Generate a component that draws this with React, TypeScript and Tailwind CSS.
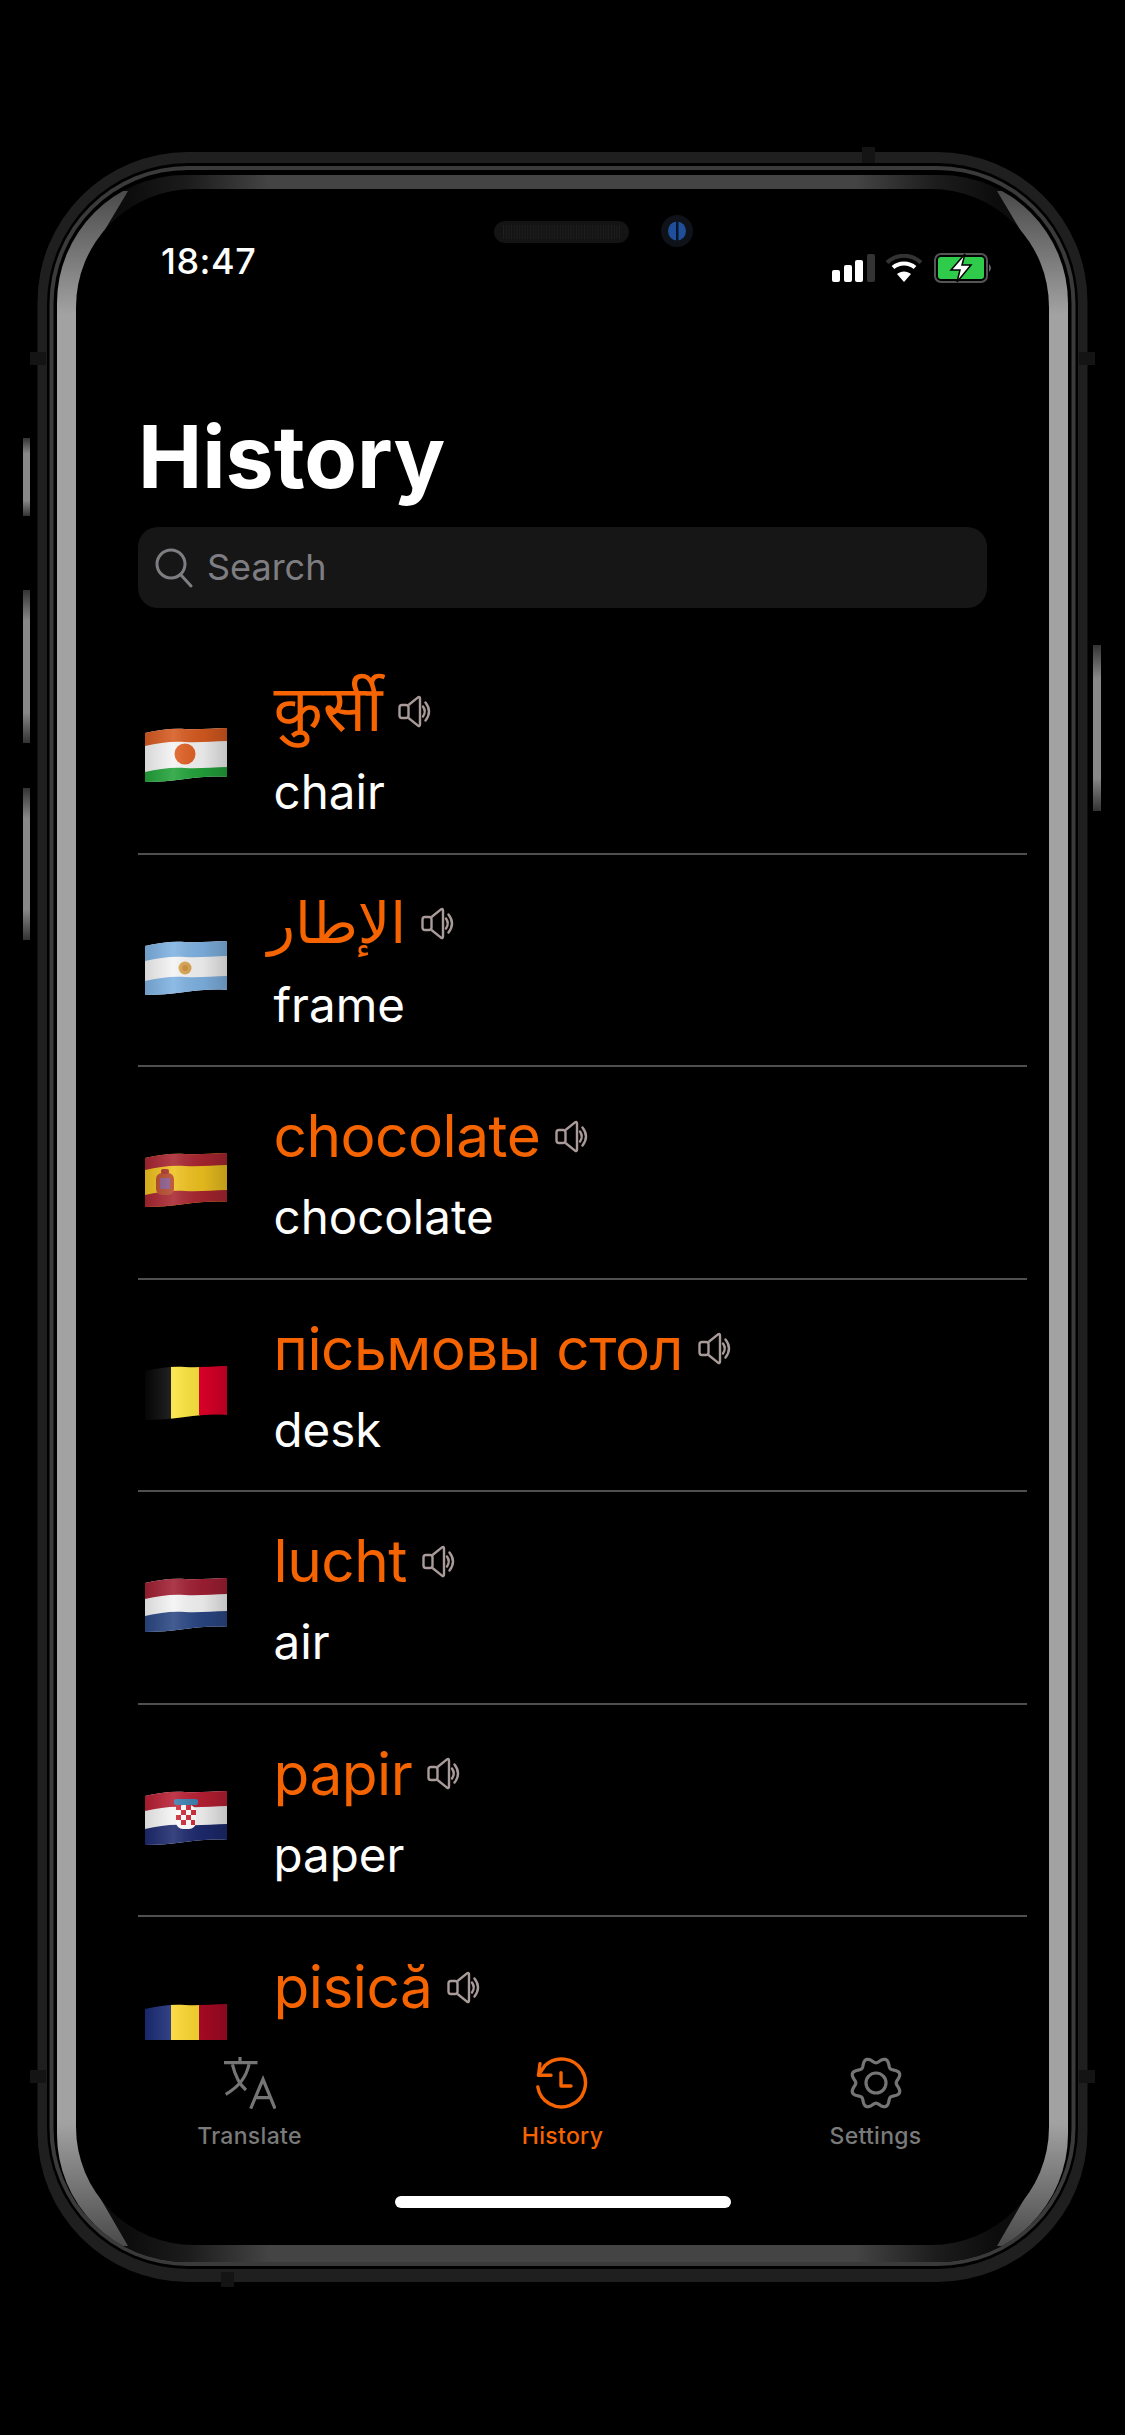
import { type ReactNode } from "react";

const sans = "font-['Inter','Noto_Sans',sans-serif]";

// top edge of the emoji flag wave, pushed down by d
const waveEdge = (d: number) =>
  `M0 ${6 + d}C14 ${3 + d} 26 ${1 + d} 40 ${2 + d}C54 ${3 + d} 68 ${1 + d} 82 ${1 + d}`;

const WAVE = `${waveEdge(0)}V50C68 49 54 50 40 52C26 54 14 55 0 55Z`;

function Flag({ id, children }: { id: string; children: ReactNode }) {
  return (
    <svg width="82" height="56" viewBox="0 0 82 56" className="block shrink-0 blur-[0.5px]">
      <defs>
        <clipPath id={id}>
          <path d={WAVE} />
        </clipPath>
        <linearGradient id={`${id}-s`} x1="0" x2="1" y1="0" y2="0">
          <stop offset="0" stopColor="#000" stopOpacity="0.12" />
          <stop offset="0.35" stopColor="#fff" stopOpacity="0.12" />
          <stop offset="0.7" stopColor="#000" stopOpacity="0.06" />
          <stop offset="1" stopColor="#000" stopOpacity="0.2" />
        </linearGradient>
      </defs>
      <g clipPath={`url(#${id})`}>
        {children}
        <rect width="82" height="56" fill={`url(#${id}-s)`} />
      </g>
    </svg>
  );
}

function Bands({ colors, a, b }: { colors: [string, string, string]; a: number; b: number }) {
  return (
    <>
      <rect width="82" height="56" fill={colors[1]} />
      <path d={`${waveEdge(a)}V0H0Z`} fill={colors[0]} />
      <path d={`${waveEdge(b)}V56H0Z`} fill={colors[2]} />
    </>
  );
}

function Stripes({ colors }: { colors: [string, string, string] }) {
  return (
    <>
      <rect width="27" height="56" fill={colors[0]} />
      <rect x="26" width="29" height="56" fill={colors[1]} />
      <rect x="54" width="28" height="56" fill={colors[2]} />
    </>
  );
}

const flags: Record<string, ReactNode> = {
  ne: (
    <Flag id="ne">
      <Bands colors={["#d65a1f", "#f4f4f4", "#22a33a"]} a={13} b={39} />
      <circle cx="40" cy="27" r="10.5" fill="#e05e22" />
    </Flag>
  ),
  ar: (
    <Flag id="ar">
      <Bands colors={["#7fb2e2", "#f4f4f4", "#7fb2e2"]} a={15} b={35} />
      <circle cx="40" cy="28" r="6.5" fill="#d9a550" />
      <circle cx="40" cy="28" r="3" fill="#c98f3a" />
    </Flag>
  ),
  es: (
    <Flag id="es">
      <rect width="82" height="56" fill="#efc21f" />
      <path d={`${waveEdge(12)}V0H0Z`} fill="#a82530" />
      <path d={`${waveEdge(37)}V56H0Z`} fill="#a82530" />
      <rect x="11" y="21" width="18" height="22" rx="6" fill="#b5492b" />
      <rect x="15" y="26" width="10" height="11" fill="#8d5a8c" />
      <rect x="16" y="17" width="8" height="5" rx="2" fill="#a8322a" />
    </Flag>
  ),
  be: (
    <Flag id="be">
      <Stripes colors={["#060606", "#fbe43c", "#e2002a"]} />
    </Flag>
  ),
  nl: (
    <Flag id="nl">
      <Bands colors={["#a01f33", "#f4f4f4", "#2a4784"]} a={16} b={33} />
    </Flag>
  ),
  hr: (
    <Flag id="hr">
      <Bands colors={["#b81f33", "#f4f4f4", "#1d2a6e"]} a={15} b={33} />
      <rect x="29" y="9" width="24" height="6" rx="2" fill="#3c7fb0" />
      <rect x="31" y="15" width="20" height="24" rx="7" fill="#fff" />
      <g fill="#cf2b3a">
        <rect x="31" y="15" width="5" height="5" />
        <rect x="41" y="15" width="5" height="5" />
        <rect x="36" y="20" width="5" height="5" />
        <rect x="46" y="20" width="5" height="5" />
        <rect x="31" y="25" width="5" height="5" />
        <rect x="41" y="25" width="5" height="5" />
        <rect x="36" y="30" width="5" height="5" />
        <rect x="46" y="30" width="4" height="5" />
      </g>
    </Flag>
  ),
  ro: (
    <Flag id="ro">
      <Stripes colors={["#1a2c78", "#fbd52e", "#ab0a25"]} />
    </Flag>
  ),
};

function Speaker() {
  return (
    <svg width="34" height="33" viewBox="0 0 34 33" fill="none" stroke="#a89b99" strokeWidth="2.4" className="shrink-0">
      <rect x="1.5" y="10" width="9" height="13" rx="2.5" />
      <path d="M10.5 10 20 2.4Q22 1.2 22 3.4V29.6Q22 31.8 20 30.6L10.5 23" strokeLinejoin="round" />
      <path d="M25 11.5Q28.5 16.5 25 21.5" strokeLinecap="round" />
      <path d="M27.5 7.5Q34.5 16.5 27.5 25.5" strokeLinecap="round" />
    </svg>
  );
}

const latin = "text-[58.5px] tracking-[-0.5px]";

// the last row's translation sits under the tab bar in the screenshot, so it has none
const rows = [
  {
    flag: "ne",
    word: "कुर्सी",
    meaning: "chair",
    style: "pt-[10px] text-[64px] font-['Noto_Sans_Devanagari','Noto_Sans','DejaVu_Sans',sans-serif]",
  },
  { flag: "ar", word: "الإطار", meaning: "frame", style: "-ml-[6px] text-[57px] font-['DejaVu_Sans',sans-serif]" },
  { flag: "es", word: "chocolate", meaning: "chocolate", style: latin },
  { flag: "be", word: "пісьмовы стол", meaning: "desk", style: latin },
  { flag: "nl", word: "lucht", meaning: "air", style: latin },
  { flag: "hr", word: "papir", meaning: "paper", style: latin },
  { flag: "ro", word: "pisică", meaning: "", style: latin },
];

function HistoryRow({ flag, word, meaning, style }: (typeof rows)[number]) {
  return (
    <div className="flex h-[212.5px] shrink-0 items-center border-b-2 border-[#4f4f4f] last:border-b-0">
      <div className="ml-[7px] mt-[16px] w-[128.5px] shrink-0">{flags[flag]}</div>
      <div className="mt-[3px] flex flex-col">
        <div className="flex h-[72px] items-center gap-[15px]">
          <span className={`leading-none text-[#f56400] ${style}`}>{word}</span>
          <Speaker />
        </div>
        <span className="mt-[15px] h-[60px] text-[47.5px] leading-[60px] text-white">{meaning}</span>
      </div>
    </div>
  );
}

function TranslateIcon() {
  return (
    <svg width="52" height="52" viewBox="0 0 52 52" fill="none" stroke="#757575" strokeWidth="3.2">
      <path d="M0 5.6H33.5M16 0V5.6" />
      <path d="M8.4 7.3C11 18 15 27 22 33" />
      <path d="M25 7.3C22 22 13 31 1.7 37.3" />
      <path d="M26.7 51.6 39 22.3 51 51.6M31.5 40.6H46.5" />
    </svg>
  );
}

function HistoryIcon() {
  return (
    <svg width="52" height="52" viewBox="0 0 52 52" fill="none" stroke="#f56400" strokeWidth="3.4" strokeLinecap="round" strokeLinejoin="round">
      <path d="M1.8 30A24 24 0 1 0 9 8.5L2.5 18" />
      <path d="M4 6.6 2.5 18.3H15" />
      <path d="M25 15.6V29H35" />
    </svg>
  );
}

// scalloped gear outline, eight lobes with a valley at the top
const gearPath = (() => {
  const pts: string[] = [];
  for (let i = 0; i < 240; i++) {
    const a = (i / 240) * Math.PI * 2;
    const r = 22.8 - 2.6 * Math.cos(8 * a);
    pts.push(`${(26 + r * Math.sin(a)).toFixed(2)} ${(26 - r * Math.cos(a)).toFixed(2)}`);
  }
  return `M${pts.join("L")}Z`;
})();

function GearIcon() {
  return (
    <svg width="52" height="52" viewBox="0 0 52 52" fill="none" stroke="#757575" strokeWidth="3.2">
      <path d={gearPath} />
      <circle cx="26" cy="26" r="10" />
    </svg>
  );
}

function Tab({ icon, label, active }: { icon: ReactNode; label: string; active?: boolean }) {
  return (
    <div className="flex flex-col items-center">
      {icon}
      <span
        className={`mt-[12px] text-[23px] font-medium leading-[30px] tracking-[0.3px] ${active ? "text-[#f56400]" : "text-[#7a7a7a]"}`}
      >
        {label}
      </span>
    </div>
  );
}

function StatusIcons() {
  return (
    <div className="flex items-center">
      <svg width="44" height="28" viewBox="0 0 44 28">
        <rect x="0" y="16" width="8" height="12" rx="2" fill="#fff" />
        <rect x="12" y="11" width="8" height="17" rx="2" fill="#fff" />
        <rect x="23" y="6" width="8" height="22" rx="2" fill="#fff" />
        <rect x="35" y="0" width="8" height="28" rx="2" fill="#333" />
      </svg>
      <svg width="36" height="28" viewBox="0 0 36 28" fill="none" className="ml-[10px]">
        <path d="M1 8.5C11-.5 25-.5 35 8.5" stroke="#333" strokeWidth="4" />
        <path d="M7 13.5C13 8 23 8 29 13.5" stroke="#fff" strokeWidth="4" />
        <path d="M18 28 11 20C15 16.5 21 16.5 25 20Z" fill="#fff" />
      </svg>
      <svg width="60" height="30" viewBox="0 0 60 30" className="ml-[12px]">
        <rect x="1" y="1" width="52" height="28" rx="6" fill="none" stroke="#555" strokeWidth="2" />
        <rect x="4" y="4" width="46" height="22" rx="3" fill="#2fcb4b" />
        <path d="M55 11Q59 15 55 19Z" fill="#666" />
        <path d="M31 1 17 17H26L23 29 37 12H28Z" fill="#fff" stroke="#000" strokeWidth="1.5" />
      </svg>
    </div>
  );
}

function DeviceFrame() {
  const speakerDots = Array.from({ length: 44 }, (_, i) => i);
  const tabs: [number, number, number, number][] = [
    [30, 352, 16, 13],
    [1079, 352, 16, 13],
    [30, 2070, 16, 13],
    [1079, 2070, 16, 13],
    [862, 147, 13, 16],
    [221, 2272, 13, 15],
  ];
  return (
    <svg width="1125" height="2435" viewBox="0 0 1125 2435" className="absolute inset-0">
      <defs>
        <linearGradient id="band" gradientUnits="userSpaceOnUse" x1="57" x2="1068" y1="0" y2="0">
          <stop offset="0.07" stopColor="#0c0c0c" />
          <stop offset="0.13" stopColor="#1c1c1c" />
          <stop offset="0.21" stopColor="#444" />
          <stop offset="0.79" stopColor="#444" />
          <stop offset="0.87" stopColor="#1c1c1c" />
          <stop offset="0.93" stopColor="#0c0c0c" />
        </linearGradient>
        <linearGradient id="side" gradientUnits="userSpaceOnUse" x1="0" x2="0" y1="191" y2="2246">
          <stop offset="0" stopColor="#4a4a4a" />
          <stop offset="0.06" stopColor="#a2a2a2" />
          <stop offset="0.94" stopColor="#a2a2a2" />
          <stop offset="1" stopColor="#4a4a4a" />
        </linearGradient>
        <linearGradient id="btn" x1="0" x2="0" y1="0" y2="1">
          <stop offset="0" stopColor="#333" />
          <stop offset="0.2" stopColor="#888" />
          <stop offset="0.8" stopColor="#888" />
          <stop offset="1" stopColor="#333" />
        </linearGradient>
        <clipPath id="bezel">
          <rect x="57" y="175" width="1011" height="2087" rx="128" />
        </clipPath>
      </defs>

      <rect x="23" y="438" width="7" height="78" fill="url(#btn)" />
      <rect x="23" y="590" width="7" height="153" fill="url(#btn)" />
      <rect x="23" y="788" width="7" height="152" fill="url(#btn)" />
      <rect x="1093" y="645" width="8" height="166" fill="url(#btn)" />

      <rect x="37.5" y="152" width="1050" height="2130" rx="150" fill="#1f1f1f" />
      <rect x="47" y="163" width="1031" height="2106" rx="141" fill="#000" />
      <rect x="49.5" y="166" width="1026" height="2100" rx="138" fill="#3a3a3a" />
      <rect x="53.5" y="170" width="1018" height="2092" rx="134" fill="#000" />

      <g clipPath="url(#bezel)">
        <rect x="57" y="175" width="1011" height="2087" fill="url(#band)" />
        <path d="M40 191H128L88 258Q80 280 76 320V2114Q80 2155 88 2177L128 2246H40Z" fill="url(#side)" />
        <path d="M1085 191H997L1037 258Q1045 280 1049 320V2114Q1045 2155 1037 2177L997 2246H1085Z" fill="url(#side)" />
      </g>
      <rect x="76" y="189" width="973" height="2056" rx="118" fill="#000" />

      {tabs.map(([x, y, w, h], i) => (
        <rect key={i} x={x} y={y} width={w} height={h} fill="#141414" />
      ))}

      <rect x="494" y="221" width="135" height="22" rx="11" fill="#141414" />
      {speakerDots.map((i) => (
        <rect key={i} x={503 + i * 2.7} y="225" width="1" height="14" fill="#1e1e1e" />
      ))}
      <circle cx="677" cy="231" r="16" fill="#10121a" />
      <ellipse cx="677" cy="231" rx="9" ry="9.5" fill="#1f4f9a" />
      <rect x="676" y="221" width="2.5" height="20" fill="#0a1428" />
    </svg>
  );
}

export default function App() {
  return (
    <div className={`relative h-[2435px] w-[1125px] overflow-hidden bg-black ${sans}`}>
      <DeviceFrame />
      <div className="relative ml-[76px] h-[2435px] w-[973px] pt-[189px]">
        <div className="flex h-[2056px] flex-col">
          <div className="flex h-[94px] shrink-0 items-end justify-between pl-[85px] pr-[55px]">
            <span className="text-[36px] font-medium leading-[44px] tracking-[0.5px] text-white">18:47</span>
            <StatusIcons />
          </div>
          <h1 className="ml-[62px] mt-[123px] text-[86px] font-bold leading-[102px] text-white">History</h1>
          <div className="ml-[62px] mt-[19px] flex h-[81px] w-[849px] shrink-0 items-center rounded-[20px] bg-[#161616] pl-[17px] text-[#7e7e82]">
            <svg width="38" height="40" viewBox="0 0 38 40" fill="none" stroke="currentColor" strokeWidth="3">
              <circle cx="16" cy="16" r="14" />
              <path d="M26 27 36 38" strokeLinecap="round" />
            </svg>
            <span className="mb-[2px] ml-[14px] text-[36px] leading-none">Search</span>
          </div>
          <div className="ml-[62px] mt-[34px] flex w-[889px] min-h-0 flex-1 flex-col overflow-hidden">
            {rows.map((row) => (
              <HistoryRow key={row.flag} {...row} />
            ))}
          </div>
          <div className="h-[205px] shrink-0 pt-[17px]">
            <div className="grid grid-cols-3 px-[17px]">
              <div className="flex justify-center"><Tab icon={<TranslateIcon />} label="Translate" /></div>
              <div className="flex justify-center"><Tab icon={<HistoryIcon />} label="History" active /></div>
              <div className="flex justify-center"><Tab icon={<GearIcon />} label="Settings" /></div>
            </div>
            <div className="mx-auto mt-[45px] h-[12px] w-[336px] rounded-full bg-white" />
          </div>
        </div>
      </div>
    </div>
  );
}
